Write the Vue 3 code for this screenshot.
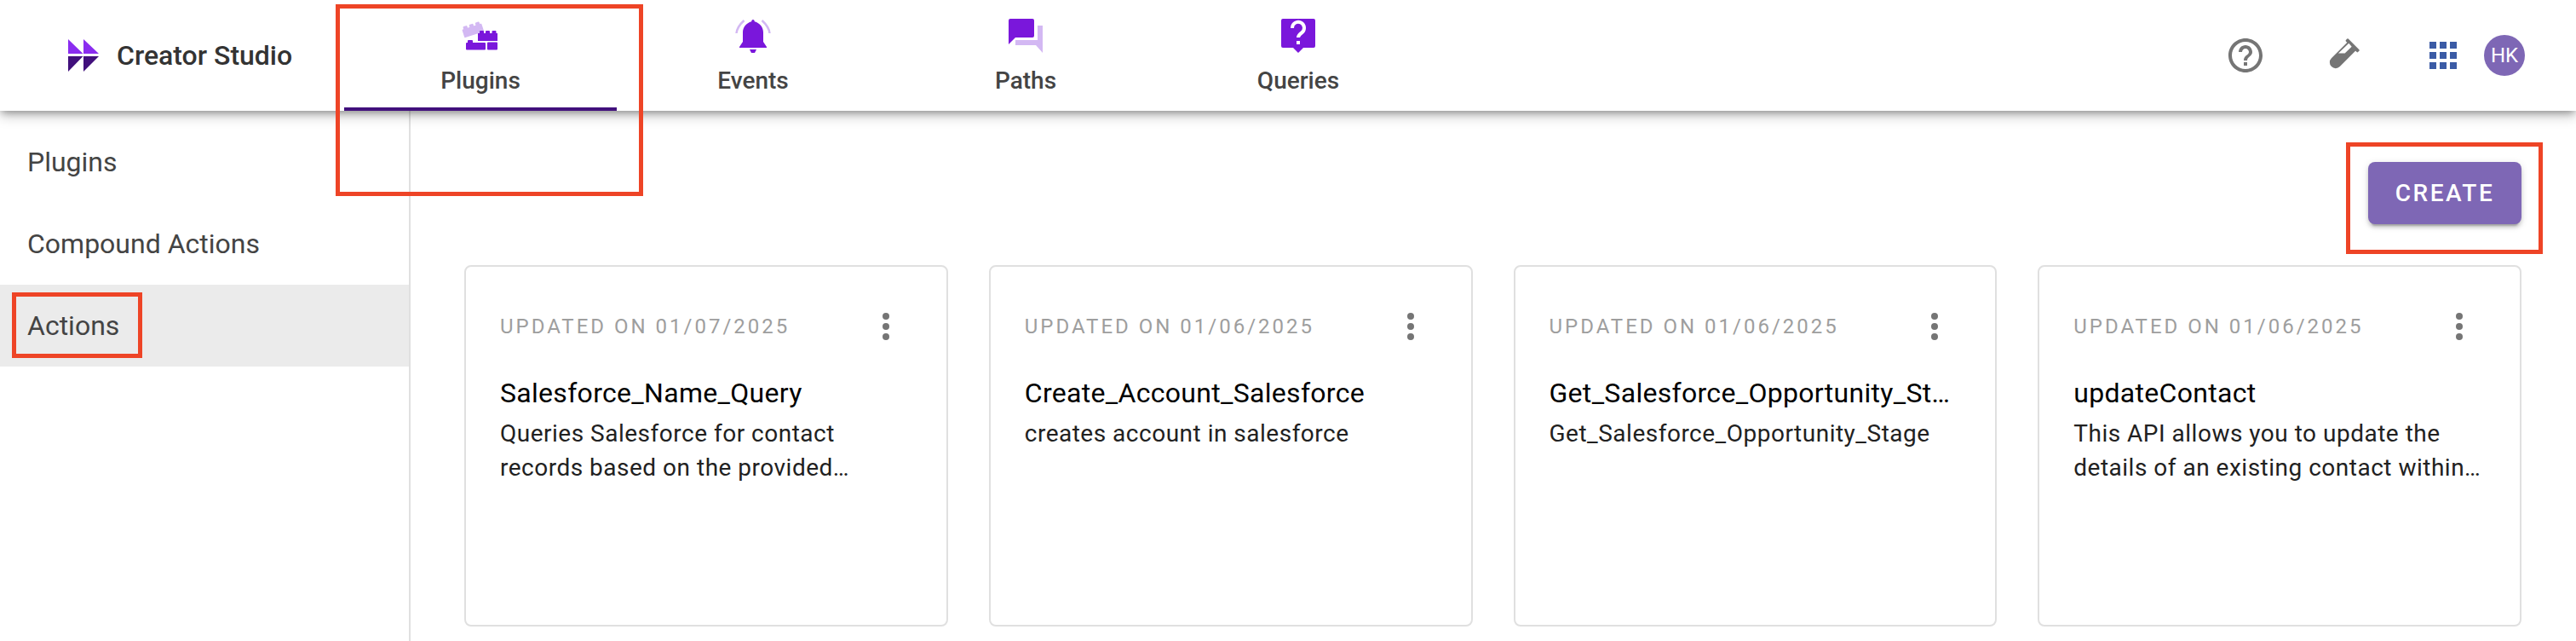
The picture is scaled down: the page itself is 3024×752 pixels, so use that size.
<template>
  <div class="page">
    <header class="topbar">
      <div class="brand">
        <svg class="logo" width="36" height="38" viewBox="0 0 36 38">
          <path d="M0 0L17.500 17H0zM18 0L36 17H18z" fill="#8a2cf0" />
          <path d="M0 20H17.500L0 38zM18 20H36L18 38z" fill="#41107c" />
        </svg>
        <span class="brand-name">Creator Studio</span>
      </div>

      <nav class="tabs">
        <div class="tab active">
          <svg class="tab-icon" viewBox="0 0 48 48">
            <g fill="#d3b8f3" transform="rotate(-18 15 17)">
              <rect x="3" y="13" width="24" height="10" rx="1" />
              <rect x="5" y="10" width="5" height="4" rx="1" />
              <rect x="12.500" y="10" width="5" height="4" rx="1" />
              <rect x="20" y="10" width="5" height="4" rx="1" />
            </g>
            <g fill="#7a17db">
              <rect x="21" y="21" width="23" height="9" />
              <rect x="23" y="18" width="5" height="4" rx="1" />
              <rect x="30" y="18" width="5" height="4" rx="1" />
              <rect x="37.500" y="18" width="5" height="4" rx="1" />
              <rect x="7" y="32" width="23" height="8.500" rx="1" />
              <rect x="9" y="29" width="6" height="4" rx="1" />
              <rect x="32" y="31.500" width="12" height="9" rx="1" />
            </g>
          </svg>
          <span>Plugins</span>
        </div>
        <div class="tab">
          <svg class="tab-icon" viewBox="0 0 48 48">
            <path d="M13.500 6C8 11 5 16 4.500 21M34.500 6C40 11 43 16 43.500 21" fill="none" stroke="#d3b8f3" stroke-width="2.500" />
            <path d="M24 5c1 0 1.600.9 1.800 2.200C32 9 36 14 36 20v11l4 6v1H8v-1l4-6V20c0-6 4-11 10.200-12.800C22.400 5.900 23 5 24 5zM20 40h8l-2 4h-4z" fill="#7a17db" />
          </svg>
          <span>Events</span>
        </div>
        <div class="tab">
          <svg class="tab-icon" viewBox="0 0 48 48">
            <path d="M38 12h6v32l-8-9H12v-6h26z" fill="#d3b8f3" />
            <path d="M6 4h26a2 2 0 0 1 2 2v18a2 2 0 0 1-2 2H12l-8 8V6a2 2 0 0 1 2-2z" fill="#7a17db" />
          </svg>
          <span>Paths</span>
        </div>
        <div class="tab">
          <svg class="tab-icon" viewBox="0 0 48 48">
            <path d="M6 4h36a2 2 0 0 1 2 2v30a2 2 0 0 1-2 2H30l-6 6-6-6H6a2 2 0 0 1-2-2V6a2 2 0 0 1 2-2z" fill="#7a17db" />
            <path d="M17 15a7 7 0 1 1 11 5.500c-2.500 1.700-4 2.800-4 5.500" fill="none" stroke="#fff" stroke-width="4" />
            <rect x="22" y="30" width="4" height="4" fill="#fff" />
          </svg>
          <span>Queries</span>
        </div>
      </nav>

      <div class="actions">
        <svg class="act help" width="48" height="48" viewBox="0 0 24 24" fill="#757575">
          <path d="M11 18h2v-2h-2v2zm1-16C6.480 2 2 6.480 2 12s4.480 10 10 10 10-4.480 10-10S17.520 2 12 2zm0 18c-4.410 0-8-3.590-8-8s3.590-8 8-8 8 3.590 8 8-3.590 8-8 8zm0-14c-2.210 0-4 1.790-4 4h2c0-1.100.9-2 2-2s2 .9 2 2c0 2-3 1.750-3 5h2c0-2.250 3-2.500 3-5 0-2.210-1.790-4-4-4z" />
        </svg>
        <svg class="act flask" width="48" height="48" viewBox="0 0 48 48">
          <g transform="rotate(45 24 24)" fill="#757575">
            <rect x="14" y="5.500" width="20" height="4" rx="1" />
            <path d="M17 9h14v26.500a7 7 0 0 1-14 0z" />
          </g>
          <path d="M19 21.500L31.300 9.800L34.700 13.800L26.700 21.500z" fill="#fff" />
        </svg>
        <div class="apps">
          <i v-for="n in 9" :key="n"></i>
        </div>
        <div class="avatar">HK</div>
      </div>
      <div class="mark mark-tab"></div>
    </header>

    <div class="body">
      <aside class="sidebar">
        <div v-for="item in menu" :key="item" class="menu-item" :class="{ selected: item === 'Actions' }">
          <span>{{ item }}</span>
        </div>
        <div class="mark mark-menu"></div>
      </aside>

      <main class="content">
        <div class="toolbar">
          <button class="create">CREATE</button>
          <div class="mark mark-create"></div>
        </div>
        <div class="cards">
          <article v-for="card in cards" :key="card.title" class="card">
            <div class="card-head">
              <span class="updated">UPDATED ON {{ card.date }}</span>
              <svg class="kebab" width="48" height="48" viewBox="0 0 48 48" fill="#757575">
                <circle cx="24" cy="12" r="4" />
                <circle cx="24" cy="24" r="4" />
                <circle cx="24" cy="36" r="4" />
              </svg>
            </div>
            <h3 class="card-title">{{ card.title }}</h3>
            <p class="card-desc">{{ card.desc }}</p>
          </article>
        </div>
      </main>
    </div>
  </div>
</template>

<script setup>
const menu = ['Plugins', 'Compound Actions', 'Actions']

const cards = [
  {
    date: '01/07/2025',
    title: 'Salesforce_Name_Query',
    desc: 'Queries Salesforce for contact records based on the provided…'
  },
  {
    date: '01/06/2025',
    title: 'Create_Account_Salesforce',
    desc: 'creates account in salesforce'
  },
  {
    date: '01/06/2025',
    title: 'Get_Salesforce_Opportunity_St…',
    desc: 'Get_Salesforce_Opportunity_Stage'
  },
  {
    date: '01/06/2025',
    title: 'updateContact',
    desc: 'This API allows you to update the details of an existing contact within…'
  }
]
</script>

<style>
html,
body {
  margin: 0;
  background: #fff;
}
</style>

<style scoped>
.page {
  width: 3024px;
  height: 752px;
  overflow: hidden;
  display: flex;
  flex-direction: column;
  font-family: Roboto, "Liberation Sans", sans-serif;
  background: #fff;
}

.topbar {
  position: relative;
  z-index: 2;
  flex: none;
  height: 130px;
  display: flex;
  background: #fff;
  box-shadow: 0 4px 8px -2px rgba(0, 0, 0, 0.3), 0 6px 14px 0 rgba(0, 0, 0, 0.22);
}

.brand {
  width: 404px;
  flex: none;
  display: flex;
  align-items: center;
  padding-left: 80px;
  box-sizing: border-box;
}

.logo {
  margin-right: 21px;
}

.brand-name {
  font-size: 32px;
  font-weight: 500;
  color: #333;
}

.tabs {
  display: flex;
}

.tab {
  width: 320px;
  height: 130px;
  box-sizing: border-box;
  display: flex;
  flex-direction: column;
  align-items: center;
  padding-top: 18px;
  font-size: 28px;
  font-weight: 500;
  line-height: 33px;
  color: #444;
}

.tab.active {
  border-bottom: 4px solid #41107c;
}

.tab-icon {
  width: 48px;
  height: 48px;
  margin-bottom: 12px;
}

.actions {
  margin-left: auto;
  padding-right: 60px;
  display: flex;
  align-items: center;
}

.help {
  margin-right: 66px;
}

.flask {
  margin-right: 78px;
}

.apps {
  width: 32px;
  height: 32px;
  display: grid;
  grid-template-columns: repeat(3, 8px);
  grid-template-rows: repeat(3, 8px);
  gap: 4px;
  margin-right: 32px;
}

.apps i {
  background: #3b5ba5;
}

.avatar {
  width: 48px;
  height: 48px;
  border-radius: 50%;
  background: #7e67b5;
  color: #fff;
  font-size: 24px;
  display: flex;
  align-items: center;
  justify-content: center;
}

.body {
  flex: 1;
  display: flex;
  min-height: 0;
}

.sidebar {
  position: relative;
  width: 482px;
  flex: none;
  box-sizing: border-box;
  padding-top: 12px;
  border-right: 2px solid #e0e0e0;
}

.menu-item {
  height: 96px;
  padding-left: 32px;
  display: flex;
  align-items: center;
  font-size: 32px;
  color: #444;
}

.menu-item.selected {
  background: #ebebeb;
}

.content {
  flex: 1;
  min-width: 0;
  padding: 60px 64px 0 63px;
}

.toolbar {
  position: relative;
  display: flex;
  justify-content: flex-end;
  margin-bottom: 48px;
}

.create {
  width: 180px;
  height: 73px;
  border: 0;
  border-radius: 8px;
  background: #7e67b5;
  color: #fff;
  font: 500 28px Roboto, "Liberation Sans", sans-serif;
  letter-spacing: 2.500px;
  box-shadow: 0 6px 2px -4px rgba(0, 0, 0, 0.2), 0 4px 4px 0 rgba(0, 0, 0, 0.14), 0 2px 10px 0 rgba(0, 0, 0, 0.12);
}

.cards {
  display: grid;
  grid-template-columns: repeat(4, minmax(0, 1fr));
  gap: 48px;
}

.card {
  height: 424px;
  box-sizing: border-box;
  padding: 46px 40px 0;
  border: 2px solid #e0e0e0;
  border-radius: 8px;
  background: #fff;
}

.card-head {
  display: flex;
  align-items: center;
  justify-content: space-between;
  height: 48px;
  margin-bottom: 30px;
  padding-right: 7px;
}

.updated {
  font-size: 24px;
  letter-spacing: 3px;
  color: #9e9e9e;
}

.card-title {
  margin: 0 0 4px;
  font-size: 32px;
  font-weight: 400;
  line-height: 48px;
  letter-spacing: 0.300px;
  color: #000;
  white-space: nowrap;
}

.card-desc {
  margin: 0;
  font-size: 28px;
  line-height: 40px;
  letter-spacing: 0.500px;
  color: #212121;
}

/* red annotation boxes drawn over the screenshot */
.mark {
  position: absolute;
  box-sizing: border-box;
  border: 5px solid #ee4426;
  pointer-events: none;
}

.mark-tab {
  left: 394px;
  top: 5px;
  width: 361px;
  height: 225px;
}

.mark-menu {
  left: 14px;
  top: 213px;
  width: 153px;
  height: 77px;
}

.mark-create {
  right: -25px;
  top: -23px;
  width: 231px;
  height: 131px;
}
</style>
